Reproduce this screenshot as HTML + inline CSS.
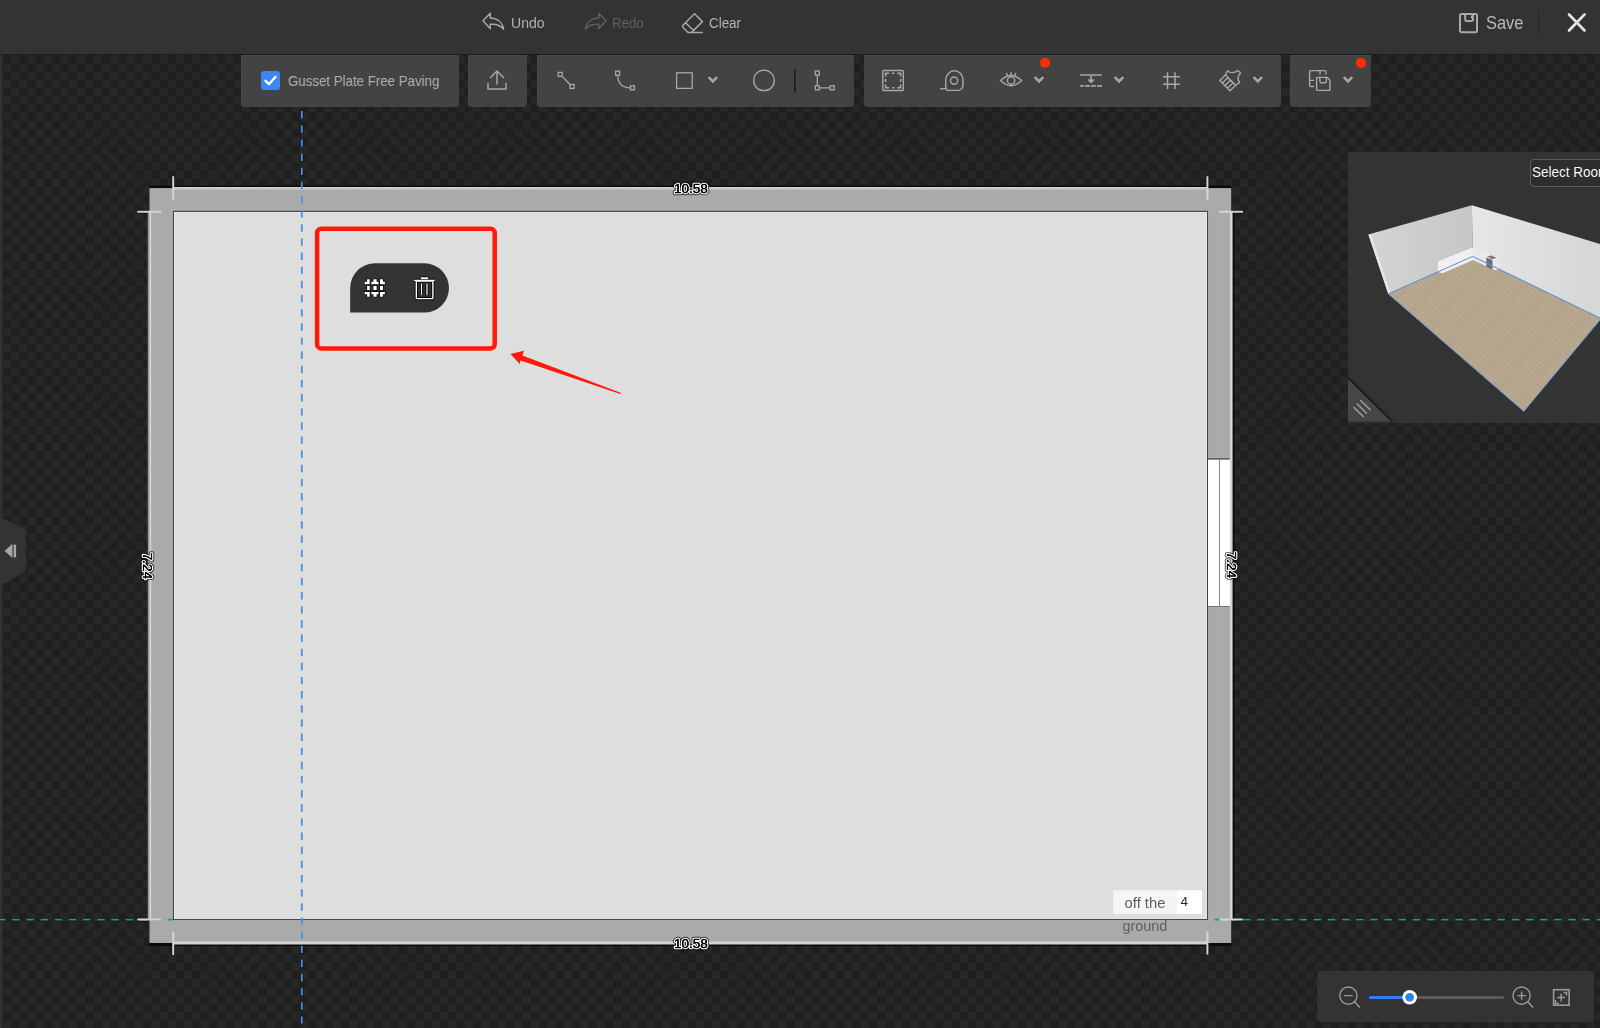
<!DOCTYPE html>
<html><head><meta charset="utf-8">
<style>
html,body{margin:0;padding:0;width:1600px;height:1028px;overflow:hidden;background:#272727;font-family:"Liberation Sans",sans-serif;}
.abs{position:absolute;}
#canvas{position:absolute;left:0;top:0;width:1600px;height:1028px;will-change:transform;}
#header{position:absolute;left:0;top:0;width:1600px;height:54px;background:#333333;box-shadow:0 1px 0 #1c1c1c;}
.htxt{position:absolute;font-size:15.5px;color:#b3b3b3;top:13.6px;line-height:18px;}
.panel{position:absolute;top:55px;height:52px;background:#434343;border-radius:1px 1px 4px 4px;box-shadow:inset 1px 1px 0 #474747;}
.ico{position:absolute;}
</style></head><body>
<svg id="canvas" width="1600" height="1028" viewBox="0 0 1600 1028">
  <defs>
    <pattern id="chk" x="2.7" y="55" width="16.5" height="16.5" patternUnits="userSpaceOnUse">
      <rect x="0" y="0" width="16.5" height="16.5" fill="#272727"/>
      <rect x="0" y="0" width="8.25" height="8.25" fill="#1f1f1f"/>
      <rect x="8.25" y="8.25" width="8.25" height="8.25" fill="#1f1f1f"/>
    </pattern>
  </defs>
  <rect x="0" y="0" width="1600" height="1028" fill="url(#chk)"/>
  <rect x="0" y="54" width="2.3" height="974" fill="#323232"/>
  <!-- room walls -->
  <g fill="none" stroke="#101010" stroke-width="3.6">
      <path d="M173.2 176.3 V200 M1207.4 176.3 V200"/>
      <path d="M173.2 931.6 V955 M1207.4 931.3 V954.6"/>
      <path d="M137.3 211.8 H161.3 M137.3 919.6 H161.3"/>
      <path d="M1219.3 211.8 H1243 M1219.3 919.6 H1242.6"/>
  </g>
  <line x1="-1.9" y1="919.6" x2="173.5" y2="919.6" stroke="#141414" stroke-width="3.4" stroke-dasharray="7.9 6.246" stroke-dashoffset="0.2"/>
  <line x1="1207.5" y1="919.6" x2="1600" y2="919.6" stroke="#141414" stroke-width="3.4" stroke-dasharray="7.9 6.246" stroke-dashoffset="7.19"/>
  <g fill="#0a0a0a"><rect x="149.5" y="185.6" width="1081.7" height="3"/><rect x="149.5" y="942" width="1081.7" height="4"/><rect x="1230" y="211.6" width="4.3" height="708"/></g>
  <rect x="149.5" y="188.1" width="1081.7" height="754.9" fill="#aaaaaa"/>
  <!-- teal guide -->
  <line x1="-1.9" y1="919.6" x2="173.5" y2="919.6" stroke="#1a9a80" stroke-width="1.8" stroke-dasharray="7.5 6.646"/>
  <line x1="1207.5" y1="919.6" x2="1600" y2="919.6" stroke="#1a9a80" stroke-width="1.8" stroke-dasharray="7.5 6.646" stroke-dashoffset="6.99"/>
  <rect x="173.5" y="211.4" width="1034" height="708" fill="#dedede" stroke="#444" stroke-width="1.1"/>
  <rect x="174.6" y="212.5" width="1031.8" height="705.8" fill="none" stroke="#e8e8e8" stroke-width="1"/>
  <!-- window on right wall -->
  <rect x="1208" y="457.8" width="22" height="1" fill="#bcbcbc"/>
  <rect x="1208" y="459.4" width="22" height="147.2" fill="#ffffff"/>
  <path d="M1207.5 458.8 H1229.7 M1207.5 606.6 H1229.7" stroke="#444" stroke-width="1.2"/>
  <line x1="1219.5" y1="459" x2="1219.5" y2="606.5" stroke="#888" stroke-width="1"/>
  <rect x="1208" y="606.6" width="22" height="1" fill="#bcbcbc"/>
  <!-- dimension lines -->
  <g stroke-linecap="butt" fill="none">
    <path d="M148.6 211.6 V919.6" stroke="#9a9a9a" stroke-width="1.6"/>
    <g stroke="#d4d4d4">
      <path d="M173.2 188.2 H1207.4" stroke-width="2.6"/>
      <path d="M173.2 943.1 H1207.4" stroke-width="3"/>
      <path d="M150.25 211.6 V919.6" stroke-width="1.9"/>
      <path d="M1231.3 211.6 V919.6" stroke-width="2.6"/>
    </g>
    <path d="M173.2 188.5 H1207.4" stroke="#bcbcbc" stroke-width="0.6"/>
    <g stroke="#d4d4d4" stroke-width="2">
      <path d="M173.2 176.3 V200 M1207.4 176.3 V200"/>
      <path d="M173.2 931.6 V955 M1207.4 931.3 V954.6"/>
      <path d="M137.3 211.8 H161.3 M137.3 919.6 H161.3"/>
      <path d="M1219.3 211.8 H1243 M1219.3 919.6 H1242.6"/>
    </g>
  </g>
  <!-- guide dashed lines -->
  <line x1="301.8" y1="110.7" x2="301.8" y2="187" stroke="#141414" stroke-width="3.2" stroke-dasharray="8.1 6.046"/>
  <line x1="301.8" y1="943.3" x2="301.8" y2="1028" stroke="#141414" stroke-width="3.2" stroke-dasharray="8.1 6.046" stroke-dashoffset="11.5"/>
  <line x1="301.8" y1="111.1" x2="301.8" y2="1028" stroke="#4a8fe6" stroke-width="1.8" stroke-dasharray="7.4 6.746"/>
  <!-- labels -->
  <g font-family="Liberation Sans" font-size="13.6" text-anchor="middle" stroke-linejoin="round">
    <text  x="690.9" y="192.7" fill="#000" stroke="#000" stroke-opacity="0.75" stroke-width="4.4">10.58</text>
    <text  x="690.9" y="192.7" fill="#000" stroke="#fff" stroke-width="2.6" paint-order="stroke">10.58</text>
    <text  x="690.9" y="192.7" fill="#000" stroke="#000" stroke-width="0.3">10.58</text>
    <text  x="690.9" y="948.4" fill="#000" stroke="#000" stroke-opacity="0.75" stroke-width="4.4">10.58</text>
    <text  x="690.9" y="948.4" fill="#000" stroke="#fff" stroke-width="2.6" paint-order="stroke">10.58</text>
    <text  x="690.9" y="948.4" fill="#000" stroke="#000" stroke-width="0.3">10.58</text>
    <text transform="translate(148.2 566) rotate(90)" x="0" y="4.8" fill="#000" stroke="#000" stroke-opacity="0.75" stroke-width="4.4">7.24</text>
    <text transform="translate(148.2 566) rotate(90)" x="0" y="4.8" fill="#000" stroke="#fff" stroke-width="2.6" paint-order="stroke">7.24</text>
    <text transform="translate(148.2 566) rotate(90)" x="0" y="4.8" fill="#000" stroke="#000" stroke-width="0.3">7.24</text>
    <text transform="translate(1232 565) rotate(90)" x="0" y="4.8" fill="#000" stroke="#000" stroke-opacity="0.75" stroke-width="4.4">7.24</text>
    <text transform="translate(1232 565) rotate(90)" x="0" y="4.8" fill="#000" stroke="#fff" stroke-width="2.6" paint-order="stroke">7.24</text>
    <text transform="translate(1232 565) rotate(90)" x="0" y="4.8" fill="#000" stroke="#000" stroke-width="0.3">7.24</text>
  </g>
  <!-- red annotation box -->
  <rect x="317.1" y="228.8" width="177.6" height="119.6" rx="4" fill="none" stroke="#ff1a0a" stroke-width="4.5"/>
  <!-- floating toolbar -->
  <path d="M350.2 312.6 V288 A24.7 24.7 0 0 1 374.9 263.3 H424.3 A24.65 24.65 0 0 1 424.3 312.6 Z" fill="#333333"/>
  <!-- floating toolbar icons -->
  <g fill="#ffffff" stroke="#000" stroke-width="1.1" paint-order="stroke">
    <path d="M364.6 281.8 H367.1 V279.3 H369.7 V284.2 H364.6 Z"/>
    <path d="M371.3 281.8 H373.4 V279.3 H376.6 V281.8 H378.6 V284.2 H371.3 Z"/>
    <path d="M380 279.3 H382.9 V281.8 H384.9 V284.2 H380 Z"/>
    <rect x="367.1" y="286" width="2.6" height="4"/>
    <rect x="373.4" y="286" width="3.2" height="4"/>
    <rect x="380" y="286" width="2.9" height="4"/>
    <path d="M364.6 291.9 H369.7 V296.7 H367.1 V294.2 H364.6 Z"/>
    <path d="M371.3 291.9 H378.6 V294.2 H376.6 V296.7 H373.4 V294.2 H371.3 Z"/>
    <path d="M380 291.9 H384.9 V294.2 H382.9 V296.7 H380 Z"/>
  </g>
  <g fill="none" stroke="#000" stroke-width="3.2">
    <path d="M414 280.4 H434.8 M421 278.2 H427.9"/>
    <rect x="416.3" y="281" width="16.6" height="17.6" rx="0.8"/>
    <path d="M421.5 283.5 V295 M427 283.5 V295"/>
  </g>
  <g fill="none" stroke="#fff" stroke-width="1.4">
    <path d="M414 280.4 H434.8"/>
    <path d="M421 278.2 H427.9" stroke-width="1.8"/>
    <rect x="416.3" y="281" width="16.6" height="17.6" rx="0.8"/>
    <path d="M421.5 283.5 V295 M427 283.5 V295" stroke-width="1.2"/>
  </g>
  <!-- arrow -->
  <path d="M510.5 354 L524 350.8 L522.4 355.6 L621.2 392.9 L620.4 394.1 L520.6 360.5 L519.7 364 Z" fill="#ff1a0a"/>
  <!-- off the ground label -->
  <rect x="1113.2" y="890.3" width="63.5" height="23.6" fill="#f5f5f5"/>
  <rect x="1176.7" y="890.3" width="25.3" height="23.6" fill="#ffffff"/>
  <g font-family="Liberation Sans" font-size="14" fill="#5e5e5e">
    <text x="1124.6" y="908.3" textLength="40.8" lengthAdjust="spacingAndGlyphs">off the</text>
    <text x="1122.4" y="931.2" textLength="44.8" lengthAdjust="spacingAndGlyphs">ground</text>
    <text x="1180.6" y="905.6" fill="#2a2a2a" font-size="13.5">4</text>
  </g>
  <!-- left collapse tab -->
  <path d="M0 517 L23.6 528.6 Q25.8 529.7 25.8 532.2 V568.6 Q25.8 571 23.6 572.3 L0 586 Z" fill="#333333"/>
  <path d="M4.9 550.9 L12.2 544.3 V557.5 Z" fill="#a6a6a6" stroke="#a6a6a6" stroke-width="0.5" stroke-linejoin="round"/>
  <rect x="13.6" y="544.4" width="2.5" height="13.2" rx="1" fill="#a6a6a6"/>
</svg>
<div id="header">
  <svg class="ico" style="left:481px;top:12px" width="26" height="20" viewBox="0 0 26 20">
    <path d="M9.3 1.2 L2 8.8 L9.3 16.8 V12.3 C15 11.9 19.5 13.2 22.6 17.2 C21.6 10.6 16.5 6.4 9.3 6.1 Z" fill="none" stroke="#a8a8a8" stroke-width="1.5" stroke-linejoin="round"/>
  </svg>
  <div class="htxt" style="left:511.3px;transform:scaleX(0.905);transform-origin:0 0;">Undo</div>
  <svg class="ico" style="left:582px;top:12px" width="26" height="20" viewBox="0 0 26 20">
    <path d="M16.7 1.2 L24 8.8 L16.7 16.8 V12.3 C11 11.9 6.5 13.2 3.4 17.2 C4.4 10.6 9.5 6.4 16.7 6.1 Z" fill="none" stroke="#5f5f5f" stroke-width="1.5" stroke-linejoin="round"/>
  </svg>
  <div class="htxt" style="left:611.8px;color:#5f5f5f;transform:scaleX(0.855);transform-origin:0 0;">Redo</div>
  <svg class="ico" style="left:678px;top:8px" width="30" height="30" viewBox="678 8 30 30">
    <path d="M694.5 13.7 L702.4 21.6 L691.6 32.4 H689 Q687.8 32.4 687 31.6 L683 27.4 Q682 26.3 683 25.3 Z M685.6 22.7 L693.6 30.5 M691 32.4 H702.8" fill="none" stroke="#a8a8a8" stroke-width="1.5" stroke-linejoin="round"/>
  </svg>
  <div class="htxt" style="left:709.4px;transform:scaleX(0.865);transform-origin:0 0;">Clear</div>
  <svg class="ico" style="left:1458px;top:12px" width="22" height="22" viewBox="0 0 22 22">
    <path d="M3.6 2 H17.4 Q19 2 19 3.6 V18.6 Q19 20.2 17.4 20.2 H3.6 Q2 20.2 2 18.6 V3.6 Q2 2 3.6 2 Z" fill="none" stroke="#a8a8a8" stroke-width="2"/>
    <path d="M7.2 2.5 V7.8 Q7.2 8.9 8.3 8.9 H13.9 Q15 8.9 15 7.8 V2.5" fill="none" stroke="#a8a8a8" stroke-width="2"/>
    <rect x="12.8" y="3.5" width="1.4" height="3" fill="#a8a8a8"/>
  </svg>
  <div class="htxt" style="left:1485.6px;top:13.3px;font-size:17.8px;line-height:20px;color:#b9b9b9;transform:scaleX(0.925);transform-origin:0 0;">Save</div>
  <div class="abs" style="left:1538px;top:11px;width:1px;height:23px;background:#242424;"></div>
  <svg class="ico" style="left:1566px;top:12px" width="21" height="21" viewBox="0 0 21 21">
    <path d="M3 2.5 L18.5 18.5 M18.5 2.5 L3 18.5" stroke="#e4e4e4" stroke-width="2.6" stroke-linecap="round"/>
  </svg>
</div>
<div class="panel" style="left:241px;width:218px;">
  <div class="abs" style="left:20px;top:16px;width:19px;height:19px;background:#3d85f0;border-radius:3px;"></div>
  <svg class="ico" style="left:20px;top:16px" width="19" height="19" viewBox="0 0 19 19"><path d="M4.5 9.8 L8 13.2 L14.5 5.8" fill="none" stroke="#ffffff" stroke-width="2.4" stroke-linecap="round" stroke-linejoin="round"/></svg>
  <div class="abs" style="left:47px;top:16.5px;font-size:15px;line-height:18px;color:#acacac;white-space:nowrap;transform:scaleX(0.885);transform-origin:0 0;">Gusset Plate Free Paving</div>
</div>
<div class="panel" style="left:468px;width:59px;">
  <svg class="ico" style="left:17px;top:13px" width="24" height="24" viewBox="0 0 24 24"><path d="M12 3 V16 M5.5 9.5 L12 3 L18.5 9.5 M3 15.5 V21 H21 V15.5" fill="none" stroke="#a8a8a8" stroke-width="1.5" stroke-linecap="round" stroke-linejoin="round"/></svg>
</div>
<div class="panel" style="left:537px;width:317px;">
  <svg class="ico" style="left:0;top:0" width="317" height="52" viewBox="537 55 317 52">
    <g fill="none" stroke="#a8a8a8" stroke-width="1.3">
      <!-- line -->
      <rect x="558.2" y="72.4" width="4" height="4"/><rect x="570" y="84.5" width="4" height="4"/>
      <path d="M562.2 76.4 L570 84.5"/>
      <!-- curve -->
      <rect x="615.6" y="71.2" width="4" height="4"/><rect x="630.4" y="85.8" width="4" height="4"/>
      <path d="M617.6 75.2 Q618 87.6 630.4 87.8"/>
      <!-- square -->
      <rect x="676.6" y="72.8" width="15.6" height="15.6"/>
      <!-- circle -->
      <circle cx="764" cy="80.4" r="10.3"/>
      <!-- L -->
      <rect x="815.3" y="71" width="4" height="4"/><rect x="815.3" y="85.8" width="4" height="4"/><rect x="830.2" y="85.8" width="4" height="4"/>
      <path d="M817.3 75 V85.8 M819.3 87.8 H830.2"/>
    </g>
    <path d="M708.6 77.2 L712.8 81.4 L717 77.2" fill="none" stroke="#a8a8a8" stroke-width="2.5"/>
    <rect x="794" y="69" width="1.6" height="23.5" fill="#1c1c1c"/>
  </svg>
</div>
<div class="panel" style="left:864px;width:417px;">
  <svg class="ico" style="left:0;top:0" width="417" height="52" viewBox="864 55 417 52">
    <g fill="none" stroke="#a8a8a8" stroke-width="1.4">
      <rect x="882.8" y="70.5" width="20.5" height="20" rx="1"/>
      <path d="M885.6 76.6 V73.3 H889.2 M891.9 73.3 H894.2 M897.2 73.3 H900.6 V76.6 M900.6 79 V81.9 M900.6 84.6 V87.7 H897.2 M894.2 87.7 H891.9 M889.2 87.7 H885.6 V84.6 M885.6 81.9 V79" stroke-width="1.6"/>
      <path d="M941 89.8 V88.6 H945.8 M945.8 88.6 V80 A8.6 9.2 0 0 1 963 80 V85.2 A5.2 5.2 0 0 1 957.8 90.4 H948.4 A2.6 2.6 0 0 1 945.8 87.8"/>
      <circle cx="954.1" cy="80.6" r="3.6"/>
      <path d="M1000.6 80.6 Q1011 70.5 1021.6 80.6 Q1011 91 1000.6 80.6 Z"/>
      <circle cx="1011.1" cy="80.5" r="3.7"/>
      <path d="M1011 72.2 V75 M1006.2 73.2 L1007.4 75.4 M1015.8 73.2 L1014.6 75.4" stroke-width="1.5"/>
      <path d="M1080.2 75 H1102 M1091.06 76 V82 M1088.3 79.4 L1091.06 82.3 L1093.9 79.4" stroke-width="1.7"/>
      <path d="M1080.2 85.9 H1084 M1085.2 85.9 H1089.9 M1091.1 85.9 H1095.8 M1097.1 85.9 H1102" stroke-width="1.8"/>
      <path d="M1167.5 72.2 V89 M1175 72.2 V89 M1163 76.8 H1180 M1163 84.3 H1180" stroke-width="1.5"/>
      <g transform="translate(1230.5 80.5) rotate(45)" stroke-width="1.4" stroke-linejoin="round">
        <path d="M-7.5 -0.3 H7 V7.6 H-7.5 Z M-3.9 -0.3 V7.6 M-0.25 -0.3 V7.6 M3.4 -0.3 V7.6"/>
        <path d="M-7.5 -0.3 L-9 -4.9 C-6 -4.9 -2.6 -7.2 -2 -12.2 L1.6 -12.6 C2.2 -7.6 5 -5.2 7.8 -5.2 L7 -0.3"/>
      </g>
    </g>
    <g fill="none" stroke="#a8a8a8" stroke-width="2.5">
      <path d="M1034.8 77.2 L1039 81.4 L1043.2 77.2"/>
      <path d="M1114.8 77.2 L1119 81.4 L1123.2 77.2"/>
      <path d="M1253.6 77.2 L1257.8 81.4 L1262 77.2"/>
    </g>
    <circle cx="1045" cy="62.8" r="5" fill="#ff2d00"/>
  </svg>
</div>
<div class="panel" style="left:1290px;width:81px;">
  <svg class="ico" style="left:0;top:0" width="81" height="52" viewBox="1290 55 81 52">
    <g fill="none" stroke="#a8a8a8" stroke-width="1.4" stroke-linejoin="round">
      <path d="M1314 86.5 H1310.8 Q1309.6 86.5 1309.6 85.3 V71.8 Q1309.6 70.6 1310.8 70.6 H1324.8 Q1326 70.6 1326 71.8 V74.4 M1320 70.6 V74.6 M1309.6 80.4 H1314"/>
      <path d="M1317.6 77.4 H1327.3 L1329.9 80.5 V89.4 Q1329.9 90.4 1328.9 90.4 H1317.6 Q1316.6 90.4 1316.6 89.4 V78.4 Q1316.6 77.4 1317.6 77.4 Z M1319.9 77.4 V81.6 Q1319.9 82.7 1321 82.7 H1325.2 Q1326.3 82.7 1326.3 81.6 V77.4"/>
    </g>
    <path d="M1343.8 77.2 L1348 81.4 L1352.2 77.2" fill="none" stroke="#a8a8a8" stroke-width="2.5"/>
    <circle cx="1361" cy="62.9" r="5" fill="#ff2d00"/>
  </svg>
</div>
<div class="abs" style="left:1348px;top:152px;width:252px;height:271px;background:#333333;overflow:hidden;">
  <svg class="ico" style="left:0;top:0" width="252" height="271" viewBox="1348 152 252 271">
    <defs>
      <linearGradient id="lw" x1="0" y1="0" x2="1" y2="0">
        <stop offset="0" stop-color="#d4d4d4"/><stop offset="1" stop-color="#c6c6c6"/>
      </linearGradient>
      <linearGradient id="rw" x1="0" y1="0" x2="1" y2="0">
        <stop offset="0" stop-color="#e6e6e6"/><stop offset="1" stop-color="#d6d6d6"/>
      </linearGradient>
      <pattern id="wood" width="23" height="4.2" patternUnits="userSpaceOnUse" patternTransform="rotate(38)">
        <rect width="23" height="4.2" fill="#b6a68d"/>
        <rect y="0.9" width="14" height="0.7" fill="#bcae97"/>
        <rect x="9" y="2.9" width="14" height="0.6" fill="#ad9d85"/>
        <rect x="3" y="2.1" width="6" height="0.5" fill="#b0a088"/>
      </pattern>
    </defs>
    <!-- left wall -->
    <path d="M1368.4 234.5 L1471.9 205.3 L1472.7 256.4 L1388.3 293.9 Z" fill="url(#lw)"/>
    <path d="M1368.4 234.5 L1371 235 L1390.5 293.2 L1388.3 293.9 Z" fill="#e8e8e8"/>
    <!-- right wall -->
    <path d="M1471.9 205.3 L1600 244 L1600 318 L1472.7 256.4 Z" fill="url(#rw)"/>
    <!-- floor -->
    <path d="M1388.3 293.9 L1472.7 256.4 L1600 318 L1600 320 L1523.8 411.4 Z" fill="url(#wood)"/>
    <!-- cabinets -->
    <path d="M1438 261.5 L1473 247.3 L1473 260 L1442 273.5 L1438 271.5 Z" fill="#f0f0f0"/>
    <path d="M1473 247.3 L1499 258 L1499 268 L1495.5 270.5 L1473 260 Z" fill="#e9e9e9"/>
    <path d="M1486.3 257.5 L1492.5 260 L1492.5 269.5 L1486.3 267 Z" fill="#6e6e6e"/>
    <path d="M1487 256.2 L1491.5 255.6 L1496.5 258 L1492 259.3 Z" fill="#7a7a7a"/>
    <path d="M1388.3 293.9 L1472.7 256.4 L1600 318 M1388.3 293.9 L1523.8 411.4 L1600 320" fill="none" stroke="#5a8fe0" stroke-width="1"/>
    <!-- corner triangle -->
    <path d="M1347.4 377 L1392 421.2 L1347.4 421.2 Z" fill="#464646"/>
    <path d="M1347.4 377 L1392.5 421.8" stroke="#161616" stroke-width="1.6"/>
    <path d="M1353.8 407.3 L1363.5 416.8 M1357.2 404 L1366.6 413.4 M1360.6 400.5 L1370.3 409.8" stroke="#a6a6a6" stroke-width="1.2" stroke-linecap="round"/>
  </svg>
  <div class="abs" style="left:182px;top:7px;width:80px;height:28px;border:1px solid #5c5c5c;border-radius:4px;background:#2e2e2e;box-sizing:border-box;"></div>
  <div class="abs" style="left:184px;top:12px;font-size:14.5px;line-height:16px;color:#ffffff;white-space:nowrap;transform:scaleX(0.93);transform-origin:0 0;text-shadow:0 0 1px #000;">Select Room</div>
</div>
<div class="abs" style="left:1317px;top:971px;width:277px;height:51px;background:#333333;border-radius:4px;">
  <svg class="ico" style="left:0;top:0" width="277" height="51" viewBox="1317 971 277 51">
    <g fill="none" stroke="#9a9a9a" stroke-width="1.4">
      <circle cx="1348.4" cy="995.6" r="8.6"/>
      <path d="M1354.6 1001.8 L1359.8 1007.4 M1344.2 995.6 H1352.6"/>
      <circle cx="1521.6" cy="995.6" r="8.6"/>
      <path d="M1527.8 1001.8 L1533 1007.4 M1517.4 995.6 H1525.8 M1521.6 991.4 V999.8"/>
      <rect x="1553.6" y="989.7" width="15.5" height="15.5" stroke-width="1.6"/>
      <path d="M1557.3 997.6 H1564.9 M1561.1 993.8 V1001.4 M1563.5 992.4 H1566.5 V995.4 M1555.5 1000 V1003.6 H1558.9" stroke-width="1.5"/>
    </g>
    <rect x="1369" y="996" width="135" height="3" rx="1.5" fill="#5a5a5a"/>
    <rect x="1369" y="996" width="41" height="3" rx="1.5" fill="#2f7ff0"/>
    <circle cx="1409.7" cy="997.3" r="7.3" fill="#ffffff"/>
    <circle cx="1409.7" cy="997.3" r="4.3" fill="#2f7ff0"/>
  </svg>
</div>
</body></html>
